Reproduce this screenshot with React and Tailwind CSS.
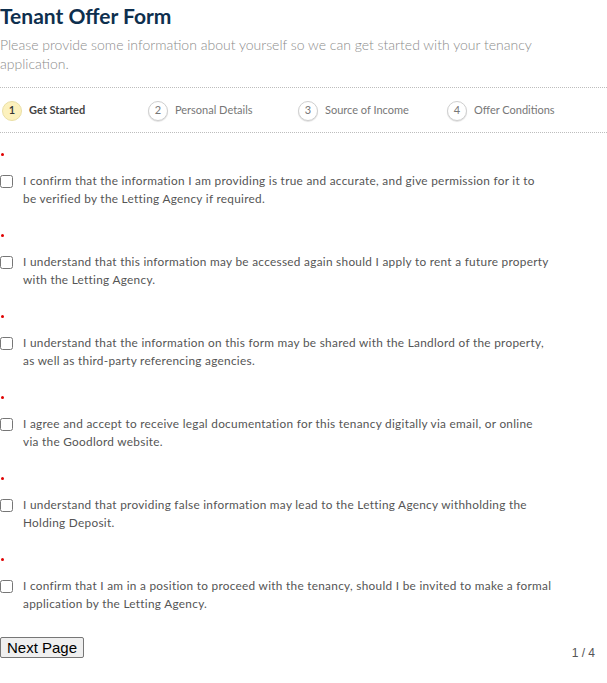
const steps = [
  { n: 1, label: 'Get Started', active: true },
  { n: 2, label: 'Personal Details' },
  { n: 3, label: 'Source of Income' },
  { n: 4, label: 'Offer Conditions' },
];

// split where the form wraps them
const terms = [
  ['I confirm that the information I am providing is true and accurate, and give permission for it to', 'be verified by the Letting Agency if required.'],
  ['I understand that this information may be accessed again should I apply to rent a future property', 'with the Letting Agency.'],
  ['I understand that the information on this form may be shared with the Landlord of the property,', 'as well as third-party referencing agencies.'],
  ['I agree and accept to receive legal documentation for this tenancy digitally via email, or online', 'via the Goodlord website.'],
  ['I understand that providing false information may lead to the Letting Agency withholding the', 'Holding Deposit.'],
  ['I confirm that I am in a position to proceed with the tenancy, should I be invited to make a formal', 'application by the Letting Agency.'],
];

export default function App() {
  return (
    <div className="w-[607px] min-h-[683px] bg-white font-['Lato',sans-serif]">
      <h1 className="text-[21px] leading-[30px] font-bold text-[#0e2f4e] pt-[1px]">Tenant Offer Form</h1>
      <p className="text-[14px] leading-[19px] font-light text-[#8c8c8c] mt-[4px] w-[570px]">
        Please provide some information about yourself so we can get started with your tenancy application.
      </p>

      <div className="mt-[14px] border-t border-b border-dotted border-[#bdbdbd] h-[46px] grid grid-cols-[146px_150px_149px_1fr] items-center pt-[1px]">
        {steps.map((s) => (
          <div key={s.n} className="flex items-center pl-[2px]">
            <span
              className={
                s.active
                  ? 'w-[20px] h-[20px] rounded-full bg-[#fcf1bd] border border-[#eadfa6] flex items-center justify-center text-[11px] text-[#333] font-semibold'
                  : 'w-[20px] h-[20px] rounded-full bg-white border border-[#cfcfcf] shadow-[0_1px_1px_rgba(0,0,0,0.12)] flex items-center justify-center text-[11px] text-[#777]'
              }
            >
              {s.n}
            </span>
            <span
              className={
                s.active
                  ? 'ml-[7px] text-[11px] font-bold text-[#444]'
                  : 'ml-[7px] text-[11px] text-[#777]'
              }
            >
              {s.label}
            </span>
          </div>
        ))}
      </div>

      <div className="pt-[12px]">
        {terms.map((t, i) => (
          <div key={i} className="mb-[18px]">
            <div className="h-[18px] flex items-center pl-[1px]">
              <span className="w-[3px] h-[3px] rounded-full bg-[#e00000]" />
            </div>
            <label className="mt-[9px] flex items-start">
              <input type="checkbox" className="m-0 mt-[3px] w-[13px] h-[13px] shrink-0" />
              <span className="ml-[10px] w-[560px] text-[11.8px] leading-[18px] text-[#555] tracking-[0.025em]">
                {t[0]}
                <br />
                {t[1]}
              </span>
            </label>
          </div>
        ))}
      </div>

      <div className="mt-[24px] flex items-start justify-between pr-[12px]">
        <button className="bg-[#efefef] border border-[#767676] rounded-[2px] px-[6px] py-[1px] text-[15px] leading-[17px] text-black font-['Liberation_Sans',Arial,sans-serif]">
          Next Page
        </button>
        <span className="mt-[7px] text-[12px] text-[#555] font-['Liberation_Sans',Arial,sans-serif]">1 / 4</span>
      </div>
    </div>
  );
}
